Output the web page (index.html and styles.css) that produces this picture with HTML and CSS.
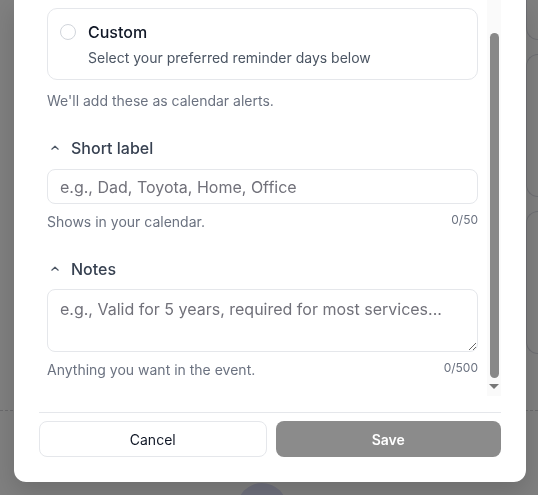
FILE: index.html
```html
<!DOCTYPE html>
<html lang="en">
<head>
  <meta charset="UTF-8" />
  <meta name="viewport" content="width=device-width, initial-scale=1.0"/>
  <title>Reminder details</title>
  <link rel="stylesheet" href="styles.css">
</head>
<body>
  <div class="page">
    <div class="page-rows">
      <div class="page-main"></div>
      <div class="page-side">
        <div class="tile tile-top"></div>
        <div class="tile"></div>
        <div class="tile"></div>
      </div>
    </div>
    <div class="page-divider"></div>
    <div class="fab"></div>
  </div>

  <div class="overlay">
    <div class="modal">
      <div class="modal-body">
        <div class="scroll-content">
          <label class="option">
            <span class="radio"></span>
            <span class="option-text">
              <span class="option-title">Custom</span>
              <span class="option-desc">Select your preferred reminder days below</span>
            </span>
          </label>
          <p class="hint">We'll add these as calendar alerts.</p>

          <div class="field">
            <div class="field-head">
              <svg width="16" height="16" viewBox="0 0 16 16" fill="none" stroke="#4b5563" stroke-width="1.2" stroke-linecap="round" stroke-linejoin="round"><path d="M4.8 9.2 8 6.2l3.2 3"/></svg>
              <span>Short label</span>
            </div>
            <input class="input" type="text" placeholder="e.g., Dad, Toyota, Home, Office">
            <div class="field-foot">
              <span>Shows in your calendar.</span>
              <span class="count">0/50</span>
            </div>
          </div>

          <div class="field">
            <div class="field-head">
              <svg width="16" height="16" viewBox="0 0 16 16" fill="none" stroke="#4b5563" stroke-width="1.2" stroke-linecap="round" stroke-linejoin="round"><path d="M4.8 9.2 8 6.2l3.2 3"/></svg>
              <span>Notes</span>
            </div>
            <textarea class="input textarea" placeholder="e.g., Valid for 5 years, required for most services..."></textarea>
            <div class="field-foot">
              <span>Anything you want in the event.</span>
              <span class="count">0/500</span>
            </div>
          </div>
        </div>
        <div class="scrollbar">
          <div class="thumb"></div>
          <div class="arrow"></div>
        </div>
      </div>
      <div class="modal-footer">
        <button class="btn btn-cancel">Cancel</button>
        <button class="btn btn-save">Save</button>
      </div>
    </div>
  </div>
</body>
</html>
```

FILE: styles.css
```css
* {
  box-sizing: border-box;
}

body {
  margin: 0;
  height: 100vh;
  overflow: hidden;
  font-family: Inter, "Noto Sans", sans-serif;
  background: #fff;
}

/* page behind the dialog */
.page {
  height: 100vh;
  overflow: hidden;
}

.page-rows {
  display: grid;
  grid-template-columns: 526px 1fr;
  height: 410px;
}

.page-side {
  display: flex;
  flex-direction: column;
}

.tile {
  height: 143px;
  margin-top: 14px;
  border: 1px solid #dcdde6;
  border-right: none;
  border-radius: 16px 0 0 16px;
}

.tile-top {
  height: 40px;
  margin-top: 0;
  border-top: none;
  border-radius: 0 0 0 16px;
}

.page-divider {
  border-top: 1px dashed #d4d4d8;
}

.fab {
  width: 50px;
  height: 50px;
  margin: 72px 0 0 237px;
  border-radius: 50%;
  background: #dcdef6;
}

/* dialog */
.overlay {
  position: fixed;
  inset: 0;
  background: rgba(0, 0, 0, 0.5);
  display: flex;
  align-items: flex-start;
  padding-left: 14px;
}

.modal {
  width: 512px;
  background: #fff;
  border-radius: 0 0 12px 12px;
  padding: 0 25px 25px;
  box-shadow: 0 10px 25px rgba(0, 0, 0, 0.15);
}

.modal-body {
  display: flex;
  height: 396px;
}

.scroll-content {
  flex: 1;
  padding: 8px 9px 0 8px;
  overflow: hidden;
}

.option {
  display: flex;
  gap: 12px;
  padding: 11px 12px;
  border: 1px solid #e5e7eb;
  border-radius: 10px;
}

.radio {
  flex: none;
  width: 16px;
  height: 16px;
  margin-top: 4px;
  border: 1px solid #d1d5db;
  border-radius: 50%;
}

.option-text {
  display: flex;
  flex-direction: column;
  gap: 4px;
}

.option-title {
  font-size: 16px;
  line-height: 24px;
  font-weight: 500;
  color: #111827;
}

.option-desc {
  font-size: 14px;
  line-height: 20px;
  color: #4b5563;
}

.hint {
  margin: 11px 0 0;
  font-size: 14px;
  line-height: 20px;
  color: #6b7280;
}

.field {
  margin-top: 25px;
}

.field-head {
  display: flex;
  align-items: center;
  gap: 8px;
  font-size: 16px;
  line-height: 24px;
  font-weight: 500;
  color: #374151;
}

.input {
  display: block;
  width: 100%;
  height: 35px;
  margin-top: 9px;
  padding: 0 12px;
  border: 1px solid #e5e7eb;
  border-radius: 8px;
  font-family: inherit;
  font-size: 16px;
  color: #111827;
  outline: none;
}

.input::placeholder {
  color: #71717a;
}

.textarea {
  height: 63px;
  margin-top: 8px;
  padding: 7px 12px;
  line-height: 24px;
  resize: vertical;
}

.field-foot {
  display: flex;
  justify-content: space-between;
  align-items: flex-start;
  margin-top: 8px;
  font-size: 14px;
  line-height: 20px;
  color: #6b7280;
}

.count {
  font-size: 12px;
  line-height: 16px;
}

.scrollbar {
  flex: none;
  width: 14px;
  background: #fafafa;
  display: flex;
  flex-direction: column;
  align-items: center;
}

.thumb {
  width: 9px;
  height: 345px;
  margin-top: 33px;
  border-radius: 5px;
  background: #888;
}

.arrow {
  margin-top: 6px;
  border-left: 5px solid transparent;
  border-right: 5px solid transparent;
  border-top: 5px solid #777;
}

.modal-footer {
  display: flex;
  gap: 9px;
  margin-top: 16px;
  padding-top: 8px;
  border-top: 1px solid #e5e7eb;
}

.btn {
  flex: 1;
  height: 36px;
  border-radius: 8px;
  font-family: inherit;
  font-size: 14px;
}

.btn-cancel {
  background: #fff;
  border: 1px solid #e5e7eb;
  color: #111827;
  font-weight: 400;
}

.btn-save {
  background: #8b8b8b;
  border: none;
  color: #fff;
  font-weight: 600;
}
```
